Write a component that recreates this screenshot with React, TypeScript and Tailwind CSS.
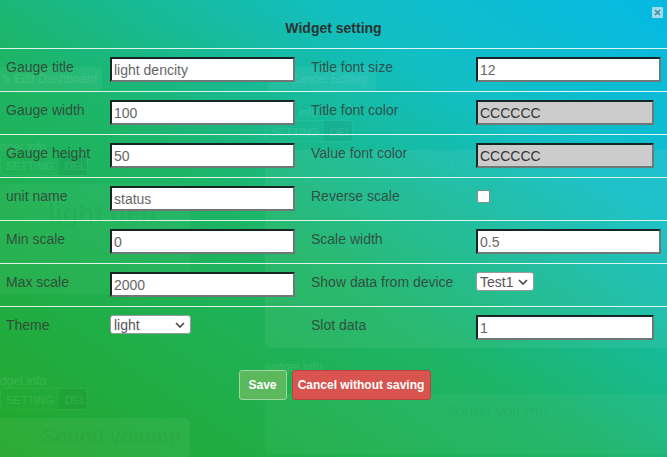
import type { ReactNode } from "react";

type Field =
  | { kind: "input"; value: string; gray?: boolean; narrow?: boolean }
  | { kind: "select"; value: string; width: string }
  | { kind: "check" };

const ROWS: [string, Field, string, Field][] = [
  ["Gauge title", { kind: "input", value: "light dencity" }, "Title font size", { kind: "input", value: "12" }],
  ["Gauge width", { kind: "input", value: "100" }, "Title font color", { kind: "input", value: "CCCCCC", gray: true, narrow: true }],
  ["Gauge height", { kind: "input", value: "50" }, "Value font color", { kind: "input", value: "CCCCCC", gray: true, narrow: true }],
  ["unit name", { kind: "input", value: "status" }, "Reverse scale", { kind: "check" }],
  ["Min scale", { kind: "input", value: "0" }, "Scale width", { kind: "input", value: "0.5" }],
  ["Max scale", { kind: "input", value: "2000" }, "Show data from device", { kind: "select", value: "Test1", width: "w-[58px]" }],
  ["Theme", { kind: "select", value: "light", width: "w-[81px]" }, "Slot data", { kind: "input", value: "1", narrow: true }],
];

function Chevron() {
  return (
    <svg width="10" height="6" viewBox="0 0 10 6" className="shrink-0">
      <path d="M1 1l4 4 4-4" fill="none" stroke="#444" strokeWidth="1.6" />
    </svg>
  );
}

function FieldCell({ f }: { f: Field }) {
  if (f.kind === "check") {
    return (
      <div className="pt-[12px] pl-px">
        <div className="h-[13px] w-[13px] rounded-[2px] border border-[#8a8a8a] bg-white" />
      </div>
    );
  }
  if (f.kind === "select") {
    return (
      <div className="pt-[8px]">
        <div
          className={
            "flex h-[19px] items-center justify-between rounded-[3px] border border-[#9a9a9a] bg-white pl-[3px] pr-[5px] text-[14px] leading-none text-[#555] " +
            f.width
          }
        >
          <span>{f.value}</span>
          <Chevron />
        </div>
      </div>
    );
  }
  return (
    <div className="pt-[8px]">
      <input
        readOnly
        value={f.value}
        className={[
          "block h-[25px] border-2 border-t-[#162624] border-l-[#162624] border-r-[#6f7777] border-b-[#6f7777] px-[2px] text-[14px] outline-none",
          f.narrow ? "w-[178px]" : "w-[185px]",
          f.gray ? "bg-[#cccccc] text-[#333]" : "bg-white text-[#666]",
        ].join(" ")}
      />
    </div>
  );
}

function Label({ children, first }: { children: ReactNode; first?: boolean }) {
  return (
    <div className={"pt-[10px] text-[14px] leading-[16px] text-[#333333]/80 " + (first ? "pl-[6px]" : "")}>
      {children}
    </div>
  );
}

function GhostButtons() {
  return (
    <div className="flex h-[22px] w-[88px] overflow-hidden whitespace-nowrap rounded-sm border border-white/5 text-[11px] leading-[22px] text-white/10">
      <span className="px-[5px]">SETTING</span>
      <span className="flex-1 bg-black/5 px-[6px]">DEL</span>
    </div>
  );
}

// faint dashboard that sits behind the (transparent) settings dialog
function Background() {
  return (
    <div className="flex flex-col whitespace-nowrap text-white/10">
      <div className="flex pt-[67px]">
        <div className="ml-[-4px] h-[25px] w-[106px] rounded-[4px] bg-white/5 pl-[5px] text-[12px] leading-[25px]">
          ✎ Edit Dashboard
        </div>
        <div className="ml-[166px] h-[25px] w-[108px] rounded-[4px] bg-white/5 pl-[22px] text-[12px] leading-[25px]">
          Cancel Editing
        </div>
      </div>
      <div className="flex">
        <div className="flex w-[190px] flex-col">
          <div className="pt-[48px] text-[12px] leading-[14px]">dget info</div>
          <GhostButtons />
          <div className="mt-[8px] h-[110px] rounded-r-[6px] bg-white/4 pl-[48px] pt-[10px] text-[26px] font-bold text-black/4">
            light den
          </div>
          <div className="pt-[80px] text-[12px] leading-[14px]">dget info</div>
          <GhostButtons />
          <div className="mt-[8px] h-[40px] overflow-hidden rounded-r-[6px] bg-white/5 pl-[42px] pt-[6px] text-[20px] font-bold leading-[24px] text-black/4">
            Sound volumn
          </div>
        </div>
        <div className="ml-[75px] flex flex-1 flex-col">
          <div className="pl-[33px] pt-[14px] text-[12px] leading-[14px]">info</div>
          <GhostButtons />
          <div className="mt-[8px] h-[198px] rounded-l-[6px] bg-white/6 pl-[185px] pt-[6px] text-[14px] text-white/6">
            Light
          </div>
          <div className="pt-[12px] text-[12px] leading-[14px]">widget info</div>
          <div className="mt-[20px] h-[60px] rounded-l-[6px] bg-white/4 pl-[180px] pt-[6px] text-[16px] text-black/5">
            Sound volumn
          </div>
        </div>
      </div>
    </div>
  );
}

export default function App() {
  return (
    <div className="relative h-[457px] w-full overflow-hidden bg-[linear-gradient(to_top_right,#23a72a_0%,#1db567_45%,#12bfc4_75%,#06b9e4_100%)] font-['Liberation_Sans',Arial,sans-serif]">
      <Background />

      <div className="absolute inset-0 flex flex-col">
        <div className="relative h-[48px] pt-[20px] text-center text-[14px] font-bold leading-[16px] text-[#2a3333]">
          Widget setting
          <div className="absolute right-[4px] top-[7px] flex h-[11px] w-[11px] items-center justify-center rounded-[1px] bg-[#c9e4ea]/80">
            <svg width="7" height="7" viewBox="0 0 7 7">
              <path d="M1 1l5 5M6 1L1 6" stroke="#3d8fae" strokeWidth="1.6" />
            </svg>
          </div>
        </div>

        <div className="border-t border-white/85">
          {ROWS.map(([l1, f1, l2, f2], i) => (
            <div
              key={l1}
              className={
                "grid h-[43px] grid-cols-[110px_201px_165px_191px] " +
                (i < ROWS.length - 1 ? "border-b border-white/85" : "")
              }
            >
              <Label first>{l1}</Label>
              <FieldCell f={f1} />
              <Label>{l2}</Label>
              <FieldCell f={f2} />
            </div>
          ))}
        </div>

        <div className="mt-[20px] flex justify-center gap-[5px] pl-[2px] text-[12px] font-bold text-white">
          <button className="h-[30px] w-[48px] rounded-[3px] border border-[#9fd89f] bg-[#5cb85c]">Save</button>
          <button className="h-[30px] w-[139px] rounded-[3px] border border-[#b9433f] bg-[#d9534f]">
            Cancel without saving
          </button>
        </div>
      </div>
    </div>
  );
}
